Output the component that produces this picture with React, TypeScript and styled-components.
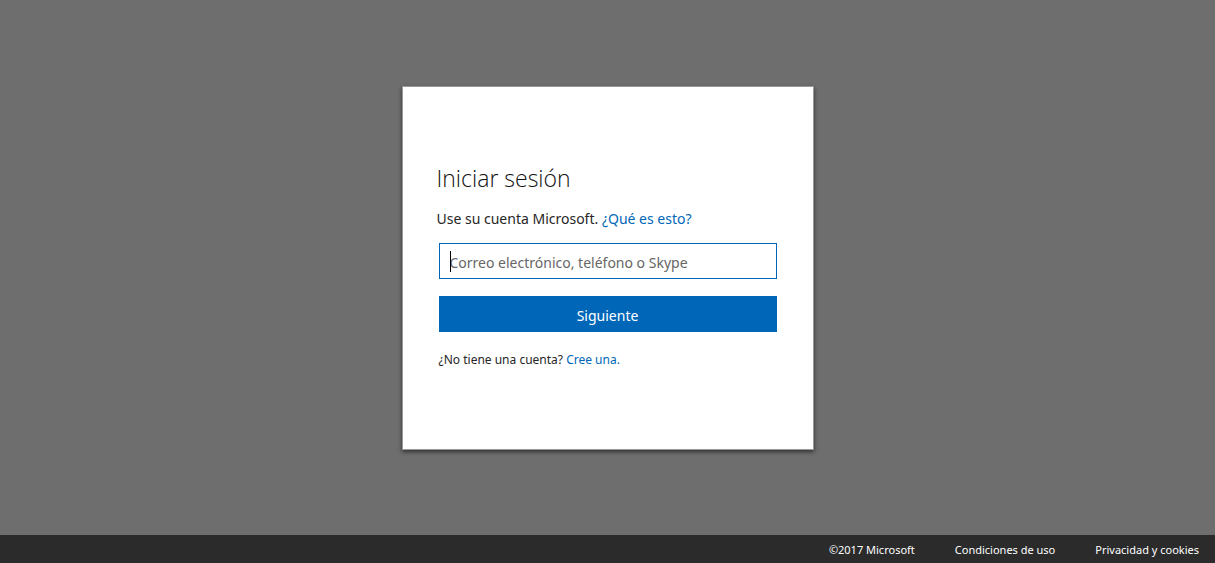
import React from 'react';
import styled, { createGlobalStyle } from 'styled-components';

const GlobalStyle = createGlobalStyle`
  *, *::before, *::after { box-sizing: border-box; }
  body {
    margin: 0;
    background: #6e6e6e;
    color: #262626;
    font-family: 'Segoe UI', 'Noto Sans', 'Open Sans', sans-serif;
    font-size: 14px;
    line-height: 20px;
  }
`;

const Page = styled.div`
  display: flex;
  flex-direction: column;
  min-height: 100vh;
`;

const Main = styled.main`
  flex: 1;
  display: flex;
  align-items: center;
  justify-content: center;
`;

const Card = styled.section`
  width: 100%;
  max-width: 412px;
  padding: 75px 34px 79px;
  background: #fff;
  border: 1px solid #999;
  box-shadow: 0 2px 4px rgba(0, 0, 0, 0.55);
`;

const Title = styled.h1`
  margin: 0;
  color: #111;
  font-family: 'Segoe UI', 'Open Sans', sans-serif;
  font-size: 23px;
  font-weight: 300;
  line-height: 32px;
`;

const Intro = styled.p`
  margin: 15px 0 14px;
`;

const Link = styled.a`
  color: #0067b8;
  text-decoration: none;
  &:hover { text-decoration: underline; }
`;

const Form = styled.form`
  display: flex;
  flex-direction: column;
  gap: 17px;
  padding: 0 2px;
`;

const Field = styled.label`
  position: relative;
  display: block;
`;

const Caret = styled.span`
  position: absolute;
  top: 8px;
  left: 11px;
  width: 1px;
  height: 21px;
  background: #000;
`;

const TextInput = styled.input`
  display: block;
  width: 100%;
  height: 36px;
  padding: 4px 10px 0;
  border: 1px solid #0067b8;
  border-radius: 0;
  outline: 0;
  background: #fff;
  color: inherit;
  font: inherit;
  &::placeholder { color: #666; opacity: 1; }
`;

const SubmitButton = styled.button`
  height: 36px;
  padding: 4px 12px 0;
  border: 0;
  background: #0067b8;
  color: #fff;
  font: inherit;
  cursor: pointer;
`;

const SignUp = styled.p`
  margin: 0;
  padding-top: 1px;
  font-size: 12px;
`;

const Footer = styled.footer`
  display: flex;
  justify-content: flex-end;
  gap: 40px;
  padding: 5px 16px 3px;
  background: #2b2b2b;
  color: #fff;
  font-size: 11px;
`;

const FooterLink = styled.a`
  color: inherit;
  text-decoration: none;
  &:hover { text-decoration: underline; }
`;

export default function App() {
  return (
    <>
      <GlobalStyle />
      <Page>
        <Main>
          <Card>
            <Title>Iniciar sesión</Title>
            <Intro>
              Use su cuenta Microsoft. <Link href="#about">¿Qué es esto?</Link>
            </Intro>
            <Form onSubmit={(event: React.FormEvent) => event.preventDefault()}>
              <Field>
                <TextInput
                  type="text"
                  name="login"
                  aria-label="Correo electrónico, teléfono o Skype"
                  placeholder="Correo electrónico, teléfono o Skype"
                />
                <Caret aria-hidden="true" />
              </Field>
              <SubmitButton type="submit">Siguiente</SubmitButton>
              <SignUp>
                ¿No tiene una cuenta? <Link href="#signup">Cree una.</Link>
              </SignUp>
            </Form>
          </Card>
        </Main>
        <Footer>
          <span>©2017 Microsoft</span>
          <FooterLink href="#terms">Condiciones de uso</FooterLink>
          <FooterLink href="#privacy">Privacidad y cookies</FooterLink>
        </Footer>
      </Page>
    </>
  );
}
